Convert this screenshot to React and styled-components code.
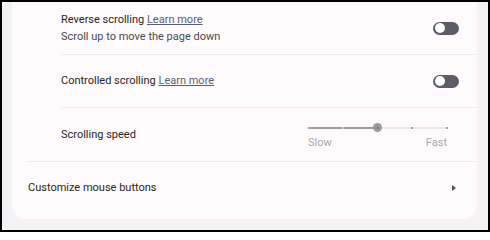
import React from "react";
import styled, { createGlobalStyle } from "styled-components";

const GlobalStyle = createGlobalStyle`
  html, body {
    margin: 0;
    padding: 0;
  }
  body {
    font-family: Roboto, "Noto Sans", Arial, sans-serif;
    -webkit-font-smoothing: antialiased;
  }
`;

const Frame = styled.div`
  box-sizing: border-box;
  width: 490px;
  height: 232px;
  border: 2px solid #000;
  background: #f3f2f5;
  padding: 0 11px 11px 10px;
  overflow: hidden;
`;

const Card = styled.div`
  background: #fffbfc;
  border-radius: 0 0 14px 14px;
  padding-bottom: 6px;
`;

const Row = styled.div`
  display: flex;
  align-items: center;
  justify-content: space-between;
  box-sizing: border-box;
  height: ${(p) => p.h || 52}px;
  margin-left: ${(p) => p.indent || 0}px;
  padding-right: 18px;
  border-bottom: ${(p) => (p.divider ? "1px solid #efeaed" : "none")};
  border-top: ${(p) => (p.topDivider ? "1px solid #efeaed" : "none")};
`;

const Texts = styled.div`
  display: flex;
  flex-direction: column;
  gap: 1px;
`;

const Title = styled.div`
  font-size: 11px;
  line-height: 16px;
  color: #262626;
`;

const Sub = styled.div`
  font-size: 11px;
  line-height: 16px;
  color: #4a4a4a;
`;

const Link = styled.a`
  color: #585d78;
  text-decoration: underline;
  text-underline-offset: 1px;
  cursor: pointer;
`;

const Toggle = styled.div`
  box-sizing: border-box;
  width: 26px;
  height: 13px;
  border-radius: 7px;
  background: #5c5d66;
  padding: 1.5px;
  display: flex;
  align-items: center;
`;

const Knob = styled.div`
  width: 10px;
  height: 10px;
  border-radius: 50%;
  background: #fff;
`;

const SliderBox = styled.div`
  width: 139px;
  margin-right: 12px;
  margin-top: 3px;
  display: flex;
  flex-direction: column;
  gap: 3px;
`;

const Track = styled.div`
  position: relative;
  height: 10px;
`;

const Bar = styled.div`
  position: absolute;
  top: 50%;
  height: ${(p) => p.thick}px;
  transform: translateY(-50%);
  background: ${(p) => p.color};
  border-radius: 1px;
`;

const Tick = styled.div`
  position: absolute;
  top: 50%;
  width: 2px;
  height: 2px;
  margin: -1px 0 0 -1px;
  border-radius: 50%;
  background: ${(p) => (p.active ? "#c9cfe0" : "#8d8d8d")};
`;

const Thumb = styled.div`
  position: absolute;
  top: 50%;
  width: 9px;
  height: 9px;
  margin: -4.5px 0 0 -4.5px;
  border-radius: 50%;
  background: #9a9a9c;
  display: flex;
  align-items: center;
  justify-content: center;
  &::after {
    content: "";
    width: 2px;
    height: 2px;
    border-radius: 50%;
    background: #6e6e70;
  }
`;

const Labels = styled.div`
  display: flex;
  justify-content: space-between;
  font-size: 11px;
  line-height: 14px;
  color: #a9a9a9;
`;

const Arrow = styled.div`
  width: 0;
  height: 0;
  margin-right: 3px;
  border-top: 3.5px solid transparent;
  border-bottom: 3.5px solid transparent;
  border-left: 4px solid #505055;
`;

function Switch() {
  return (
    <Toggle>
      <Knob />
    </Toggle>
  );
}

function SpeedSlider({ value }) {
  const ticks = [0, 25, 50, 75, 100];
  return (
    <SliderBox>
      <Track>
        <Bar thick={1} color="#d5d3d6" style={{ left: `${value}%`, right: 0 }} />
        <Bar thick={2} color="#9b9b9d" style={{ left: 0, width: `${value}%` }} />
        {ticks.map((t) => (
          <Tick key={t} active={t < value} style={{ left: `${t}%` }} />
        ))}
        <Thumb style={{ left: `${value}%` }} />
      </Track>
      <Labels>
        <span>Slow</span>
        <span>Fast</span>
      </Labels>
    </SliderBox>
  );
}

export default function App() {
  return (
    <>
      <GlobalStyle />
      <Frame>
        <Card>
          <Row indent={49} divider h={53}>
            <Texts>
              <Title>
                Reverse scrolling <Link>Learn more</Link>
              </Title>
              <Sub>Scroll up to move the page down</Sub>
            </Texts>
            <Switch />
          </Row>
          <Row indent={49} divider h={53}>
            <Title>
              Controlled scrolling <Link>Learn more</Link>
            </Title>
            <Switch />
          </Row>
          <Row indent={49} h={53}>
            <Title>Scrolling speed</Title>
            <SpeedSlider value={50} />
          </Row>
          <Row indent={16} topDivider h={52}>
            <Title>Customize mouse buttons</Title>
            <Arrow />
          </Row>
        </Card>
      </Frame>
    </>
  );
}
